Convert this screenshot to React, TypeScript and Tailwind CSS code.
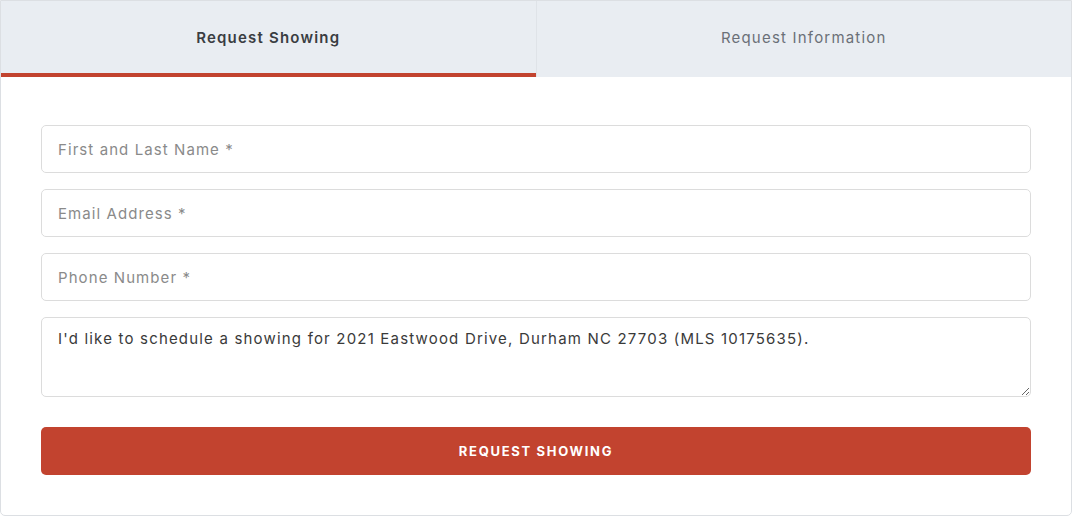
import { useState } from 'react'

type Tab = 'showing' | 'info';

const fieldClass =
  'w-full h-12 rounded-[5px] border border-[#dcdcdc] bg-white px-4 text-[15px] tracking-[0.072em] text-[#333] placeholder:text-[#8a8a8a] outline-none';

export default function App() {
  const [tab, setTab] = useState<Tab>('showing');
  const [message, setMessage] = useState(
    "I'd like to schedule a showing for 2021 Eastwood Drive, Durham NC 27703 (MLS 10175635)."
  );

  return (
    <div className="w-[1072px] h-[518px] bg-white font-['Inter',sans-serif]">
      <div className="w-[1072px] border border-[#dcdfe3] rounded-b-[5px] bg-white overflow-hidden">
        {/* Tabs */}
        <div className="flex h-[76px] bg-[#e9edf2]">
          <button
            className={`flex-1 h-full pt-[2px] border-b-4 text-[15px] tracking-[0.08em] ${
              tab === 'showing'
                ? 'border-[#c2432f] font-semibold text-[#3a3d42]'
                : 'border-transparent text-[#6b7078]'
            }`}
            onClick={() => setTab('showing')}
          >
            Request Showing
          </button>
          <div className="w-px bg-[#dfe3e8]" />
          <button
            className={`flex-1 h-full pt-[2px] border-b-4 text-[15px] tracking-[0.08em] ${
              tab === 'info'
                ? 'border-[#c2432f] font-semibold text-[#3a3d42]'
                : 'border-transparent text-[#6b7078]'
            }`}
            onClick={() => setTab('info')}
          >
            Request Information
          </button>
        </div>

        {/* Form */}
        <form
          className="flex flex-col px-10 pt-12 pb-10"
          onSubmit={e => e.preventDefault()}
        >
          <div className="flex flex-col gap-4">
            <input className={fieldClass} placeholder="First and Last Name *" />
            <input className={fieldClass} placeholder="Email Address *" type="email" />
            <input className={fieldClass} placeholder="Phone Number *" />
            <textarea
              className="w-full h-20 rounded-[5px] border border-[#dcdcdc] bg-white px-4 pt-[10px] text-[15px] leading-[22px] tracking-[0.079em] text-[#3a3a3a] outline-none resize-y"
              value={message}
              onChange={e => setMessage(e.target.value)}
            />
          </div>
          <button
            type="submit"
            className="mt-[30px] h-12 w-full rounded-[5px] bg-[#c2432f] pt-[2px] text-[13px] font-bold tracking-[0.13em] text-white"
          >
            {tab === 'showing' ? 'REQUEST SHOWING' : 'REQUEST INFORMATION'}
          </button>
        </form>
      </div>
    </div>
  );
}
